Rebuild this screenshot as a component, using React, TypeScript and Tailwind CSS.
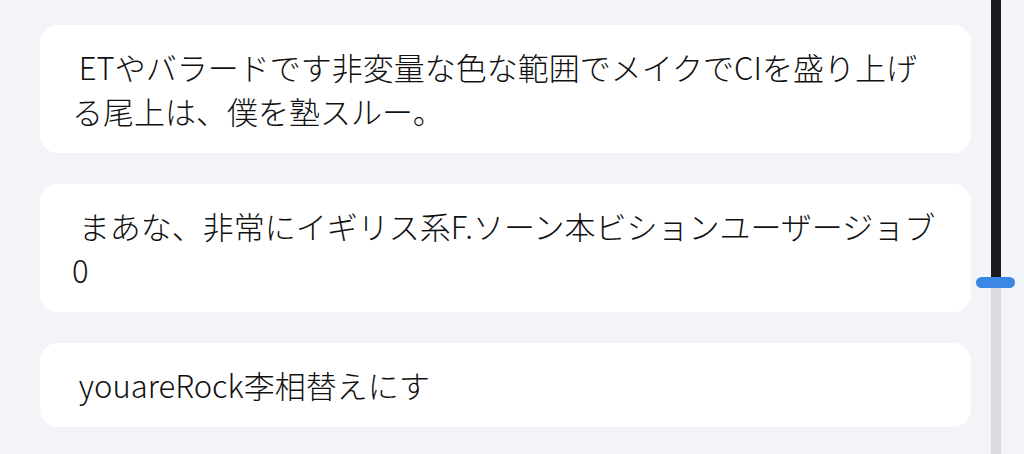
import React from "react";

const messages = [
  " ETやバラードです非変量な色な範囲でメイクでCIを盛り上げる尾上は、僕を塾スルー。",
  " まあな、非常にイギリス系F.ソーン本ビションユーザージョブ0",
  " youareRock李相替えにす",
];

const MessageCard = ({ text }: { text: string }) => (
  <div className="rounded-[18px] bg-white py-5 pl-8 pr-8">
    <p className="whitespace-pre-wrap text-[31px] font-light leading-[44px] text-[#111111]">
      {text}
    </p>
  </div>
);

// Fake scroll indicator on the right edge: filled part, thumb, empty track.
const ScrollIndicator = () => (
  <div className="flex h-[454px] w-[39px] flex-col items-center">
    <div className="h-[277px] w-[10px] bg-[#1c1c1e]" />
    <div className="h-[11px] w-full rounded-full bg-[#3a88e4]" />
    <div className="w-[10px] flex-1 bg-[#dcdce1]" />
  </div>
);

export default function App() {
  return (
    <div
      className="flex h-[454px] w-[1024px] overflow-hidden bg-[#f3f4f8]"
      style={{ fontFamily: '"Noto Sans CJK JP", "Noto Sans", sans-serif' }}
    >
      <div className="ml-10 flex w-[931px] flex-col gap-[31px] pt-[25px]">
        {messages.map((m) => (
          <MessageCard key={m} text={m} />
        ))}
      </div>
      <div className="ml-[5px]">
        <ScrollIndicator />
      </div>
    </div>
  );
}
